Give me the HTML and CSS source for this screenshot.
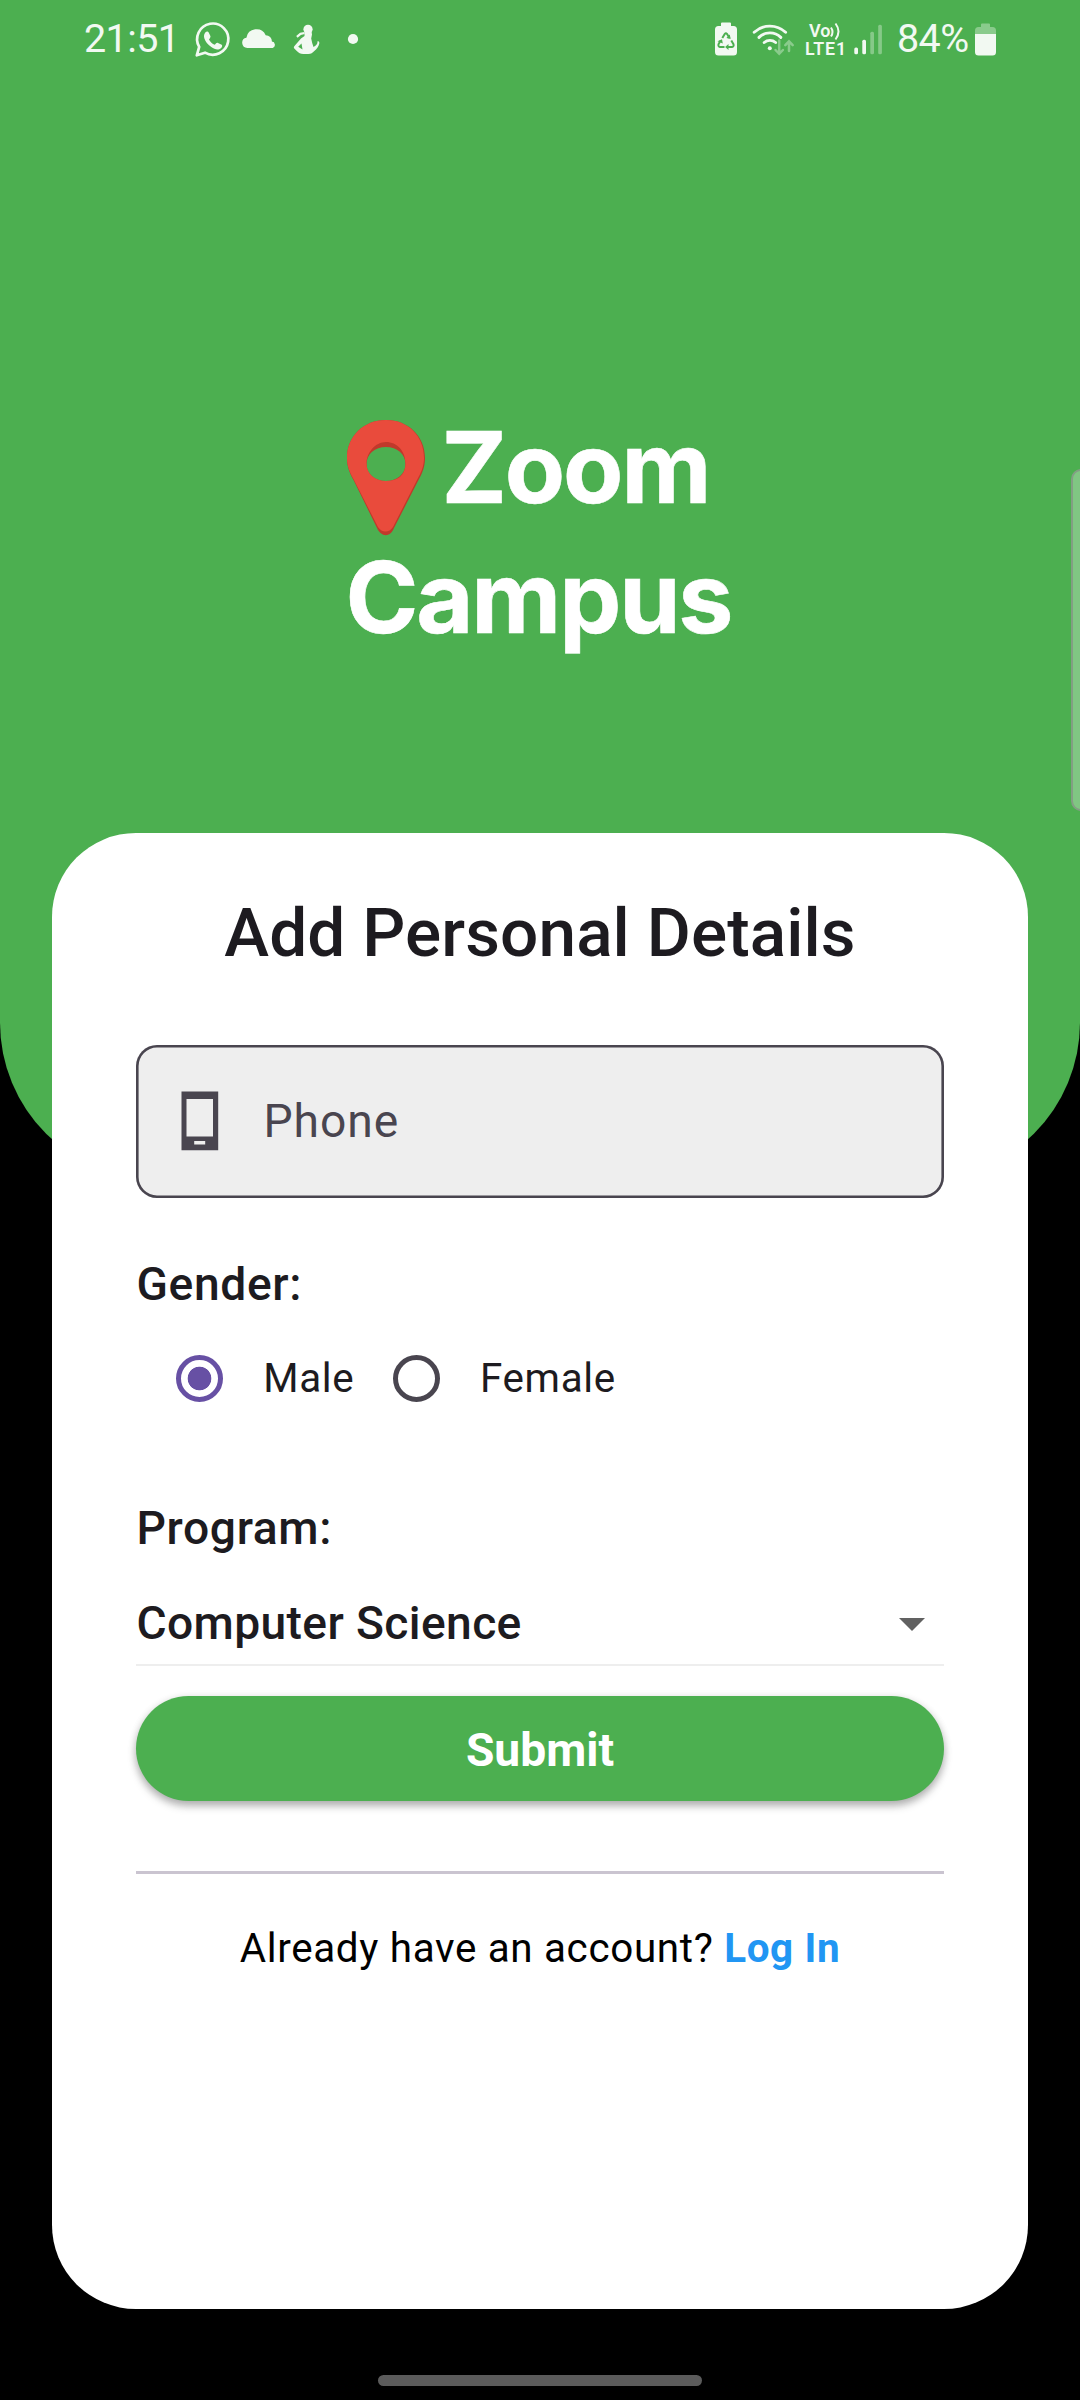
FILE: index.html
```html
<!DOCTYPE html>
<html lang="en">
<head>
<meta charset="utf-8">
<title>Zoom Campus</title>
<link rel="stylesheet" href="styles.css">
</head>
<body>
<div class="screen">
  <header class="hero">
    <div class="status">
      <span class="time">21:51</span>
      <svg width="46" height="78" viewBox="190 0 46 78" fill="none" stroke="#f2f9f2" stroke-width="2.7">
        <path d="M196.8 55.3l2.4-8.4a15.6 15.6 0 1 1 5.8 5.8z" stroke-linejoin="round"/>
        <path d="M205.3 32.6c1-1.4 2.7-1.5 3.4-.2l1.7 3.7c.4 1-.3 2.200-1.400 3.300 1.400 2.600 3.200 4.200 5.800 5.400 1.300-1.700 2-2.500 3.200-1.900l3.700 1.900c1 .7.300 2.500-.8 3.500-2.800 2.400-6.300 1.100-9.600-1.200-3.700-2.600-5.900-5.600-6.900-8.600-.8-2.500-.300-4.300.9-5.900z" fill="#f2f9f2" stroke="none"/>
      </svg>
      <svg width="49" height="78" viewBox="236 0 49 78" fill="#f2f9f2">
        <path d="M247.500 48a5.200 5.200 0 0 1-1.100-10.300 10.200 10.200 0 0 1 19.300-2.500 6.200 6.200 0 0 1 6.200 6.400 3.300 3.300 0 0 1 .8 6.400z"/>
      </svg>
      <svg width="45" height="78" viewBox="285 0 45 78" fill="#f2f9f2">
        <circle cx="308" cy="29.300" r="4.600"/>
        <path d="M304.500 31.500h7l.5 3-.8 4 1 4.500 1.300 4 1.900-1.200c1.600-1.300 2.300-2.600 2-4.200 1.300-1 2.100.2 1.900 1.800-.8 3.300-2.500 5.500-5 7.600-2 1.800-3 3-6 3h-5c-3 0-4.500-1.200-6.500-3l-2.300-2.300c-1-1-.8-2 .2-3l6.300-7.200 3.500-2.500z M301.500 43.500l-3.300 3.200 4.300 2.900z" fill-rule="evenodd"/>
        <path d="M304.500 33l-4 .8-3.600 3" fill="none" stroke="#f2f9f2" stroke-width="2.200"/>
      </svg>
      <svg width="40" height="78" viewBox="330 0 40 78"><circle cx="353" cy="39" r="5.100" fill="#f2f9f2"/></svg>
      <span class="spacer"></span>
      <svg width="37" height="78" viewBox="708 0 37 78">
        <path d="M721 26v-2.500q0-1 1-1h8q1 0 1 1V26h2.500q3.500 0 3.500 3.500V52q0 3.500-3.500 3.500h-15q-3.500 0-3.500-3.500V29.500q0-3.500 3.500-3.500z" fill="#f2f9f2"/>
        <g fill="none" stroke="#4caf50" stroke-width="2" stroke-linejoin="round">
          <path d="M722.300 38l2.600-4.200q1-1.300 2 0l2.600 4.200"/>
          <path d="M731.300 40.500l2.200 3.800q.6 2.300-1.500 2.700h-4.500"/>
          <path d="M724.500 47h-4.500q-2-.4-1.500-2.700l2-3.600"/>
        </g>
        <path d="M729.800 34.500l.8 4.500-4.200-1z M728.500 44v6l-3.400-3z M722.800 43.500l-5.300-2.300 4.500-2z" fill="#4caf50"/>
      </svg>
      <svg width="55" height="78" viewBox="745 0 55 78" fill="none" stroke="#f2f9f2" stroke-width="2.900" stroke-linecap="round">
        <path d="M754.200 32.300a23 23 0 0 1 31.400 0M759 37.400a15.500 15.500 0 0 1 21.800 0M764.200 42.500a8.800 8.800 0 0 1 11.400 0"/>
        <circle cx="769.800" cy="48.300" r="2" fill="#f2f9f2" stroke="none"/>
        <g stroke="#8acb8c" stroke-width="2.500">
          <path d="M779.200 40.500v13M775.500 50l3.700 3.800 3.700-3.800M789 51v-9M785.300 45.200l3.700-3.800 3.700 3.800"/>
        </g>
      </svg>
      <span class="volte">
        <span class="volte-top">Vo<svg width="12" height="20" viewBox="831 22 12 20" fill="none" stroke="#f2f9f2" stroke-width="2"><path d="M832 27.500q3 4.500 0 9M836.500 23.500q6 8 0 16"/></svg></span>
        <span class="volte-bottom">LTE1</span>
      </span>
      <svg width="42" height="78" viewBox="850 0 42 78" fill="#f2f9f2">
        <rect x="854.300" y="47.500" width="3.700" height="6.700" rx="1.500"/>
        <rect x="862.300" y="39.700" width="3.700" height="14.500" rx="1.500"/>
        <rect x="870.300" y="31.700" width="3.700" height="22.500" rx="1.500" fill="#86c988"/>
        <rect x="878.200" y="24.700" width="3.700" height="29.500" rx="1.500" fill="#86c988"/>
      </svg>
      <span class="percent">84%</span>
      <svg width="40" height="78" viewBox="970 0 40 78">
        <path d="M981 27v-2.500q0-1 1-1h7q1 0 1 1V27h2.500q3.500 0 3.500 3.500V34h-21v-3.500q0-3.500 3.500-3.500z" fill="#8acb8c"/>
        <path d="M975 34h21v18q0 3.500-3.500 3.500h-14q-3.500 0-3.500-3.500z" fill="#f2f9f2"/>
      </svg>
    </div>
    <div class="logo">
      <div class="logo-line">
        <svg class="pin" width="78" height="117" viewBox="0 0 78 117">
          <path fill-rule="evenodd" d="M39 0C17 0 0 16 0 38c0 9 3 16 7 23l23 47c4 9 13 10 17 0l24-47c4-7 7-14 7-23C78 16 61 0 39 0z M39 27c11 0 19.500 7 19.500 17S50 61 39 61 19.500 54 19.500 44 28 27 39 27z" fill="#c0392b"/>
          <path fill-rule="evenodd" d="M39 0C17 0 0 16 0 38c0 8 3 15 7 22l24 47c4 6 11 6 15 0l24-47c4-7 7-14 7-22C77 16 61 0 39 0z M39 22c11 0 19.500 9 19.500 21.500S50 61 39 61 19.500 54 19.500 43.500 28 22 39 22z" fill="#e94b3c"/>
        </svg>
        <span class="zoom">Zoom</span>
      </div>
      <div class="campus">Campus</div>
    </div>
    <div class="edge-handle"></div>
  </header>

  <main class="card">
    <h1 class="title">Add Personal Details</h1>
    <div class="field">
      <svg width="38" height="60" viewBox="0 0 38 60" fill="#49454f">
        <path fill-rule="evenodd" d="M.5.600h36.700v58.700H.5z M5.500 8v37.500h26.500V8z M13.200 50v3.400h11V50z"/>
      </svg>
      <span class="placeholder">Phone</span>
    </div>
    <div class="label gender">Gender:</div>
    <div class="radios">
      <span class="radio checked"></span><span class="option male">Male</span>
      <span class="radio"></span><span class="option">Female</span>
    </div>
    <div class="label program">Program:</div>
    <div class="dropdown">
      <span class="value">Computer Science</span>
      <svg width="26" height="13" viewBox="0 0 26 13"><path d="M0 0h26L13 13z" fill="#616161"/></svg>
    </div>
    <button class="submit">Submit</button>
    <div class="divider"></div>
    <p class="login">Already have an account? <a class="link">Log In</a></p>
  </main>
  <div class="home-bar"></div>
</div>
</body>
</html>
```
FILE: styles.css
```css
* { box-sizing: border-box; }
body { margin: 0; background: #000; font-family: Roboto, sans-serif; }
.screen {
  width: 1080px; height: 2400px; overflow: hidden;
  display: flex; flex-direction: column; align-items: center;
  background: #000;
}
.hero {
  position: relative; flex: none;
  width: 1080px; height: 1180px;
  background: #4caf50;
  border-radius: 0 0 157.5px 157.5px;
}
.status {
  display: flex; height: 78px; padding: 0 70px 0 84px;
  color: #f2f9f2; font-size: 39.5px; line-height: 77px;
}
.status svg { flex: none; display: block; }
.time { width: 106px; letter-spacing: -.6px; }
.spacer { flex: 1; }
.percent { width: 78px; padding-left: 5px; white-space: nowrap; letter-spacing: -.6px; }
.volte {
  width: 50px; padding: 22px 0 0 5px;
  display: flex; flex-direction: column;
  font-weight: 600; line-height: 18px;
}
.volte-top { display: flex; height: 18px; padding-left: 4px; font-size: 18px; }
.volte-bottom { font-size: 17.8px; letter-spacing: .8px; }
.logo {
  padding: 325px 0 0 347px;
  font-family: Inter, sans-serif; font-weight: 700; font-size: 98.5px;
  line-height: 130px; color: #fff; letter-spacing: -2.1px;
  -webkit-text-stroke: .6px #fff;
}
.logo-line { display: flex; height: 130px; }
.pin { display: block; flex: none; margin-top: 16.5px; }
.zoom { margin-left: 16.5px; }
.campus { margin-left: -1.5px; }
.edge-handle {
  position: absolute; right: -12px; top: 469px;
  width: 21px; height: 342px;
  border: 2px solid #839e84; border-radius: 10px;
  background: #80c683;
  clip-path: inset(0 12px 0 0);
}
.card {
  position: relative; flex: none;
  display: flex; flex-direction: column;
  width: 976px; height: 1476px; margin-top: -347.5px; padding: 60px 84px 0;
  background: #fff; border-radius: 84px;
  color: #1d1b20;
}
.title { margin: 0; text-align: center; font-size: 67.5px; line-height: 80px; font-weight: 500; letter-spacing: .09px; white-space: nowrap; }
.field {
  display: flex; align-items: center; flex: none;
  height: 152.25px; margin-top: 72.75px; padding-left: 44.5px;
  background: #eee; border-radius: 21px;
  box-shadow: inset 0 0 0 2.6px #49454f;
}
.placeholder { margin-left: 45px; font-size: 46.2px; letter-spacing: .95px; color: #49454f; }
.label { padding-left: .5px; font-size: 46.2px; line-height: 56px; font-weight: 500; letter-spacing: .63px; }
.gender { margin-top: 58.4px; }
.radios { display: flex; align-items: center; height: 126px; margin-top: 4px; padding-left: 40px; }
.radio { width: 47.2px; height: 47.2px; border: 5px solid #49454f; border-radius: 50%; }
.checked { border-color: #6750a4; background: radial-gradient(circle, #6750a4 11.4px, transparent 12.2px); }
.option { margin-left: 40px; padding-bottom: 1px; font-size: 40.4px; letter-spacing: .68px; }
.male { width: 129.5px; }
.program { margin-top: 57.9px; }
.dropdown {
  display: flex; align-items: center; justify-content: space-between; flex: none;
  height: 86px; margin-top: 24.1px; padding: 2px 19px 0 .5px;
  border-bottom: 2px solid #eee;
  font-size: 46.2px; font-weight: 500; letter-spacing: .37px;
}
.dropdown svg { margin-top: 3px; }
.submit {
  flex: none; height: 105px; margin-top: 30.25px; padding: 2px 0 0;
  border: 0; border-radius: 52.5px;
  background: #4caf50; color: #fff;
  font-family: inherit; font-size: 46.2px; font-weight: 700;
  box-shadow: 0 5px 8px rgba(0,0,0,.26), 0 2px 8px rgba(0,0,0,.12);
}
.divider { flex: none; height: 3px; margin-top: 69.75px; background: #cac4d0; }
.login { margin: 51px 0 0; text-align: center; font-size: 40.4px; line-height: 48px; letter-spacing: .66px; color: #000; white-space: nowrap; }
.link { color: #2196f3; font-weight: 700; }
.home-bar { flex: none; width: 324px; height: 11px; margin-top: 66.5px; border-radius: 5.5px; background: #5b5b5b; }
```
